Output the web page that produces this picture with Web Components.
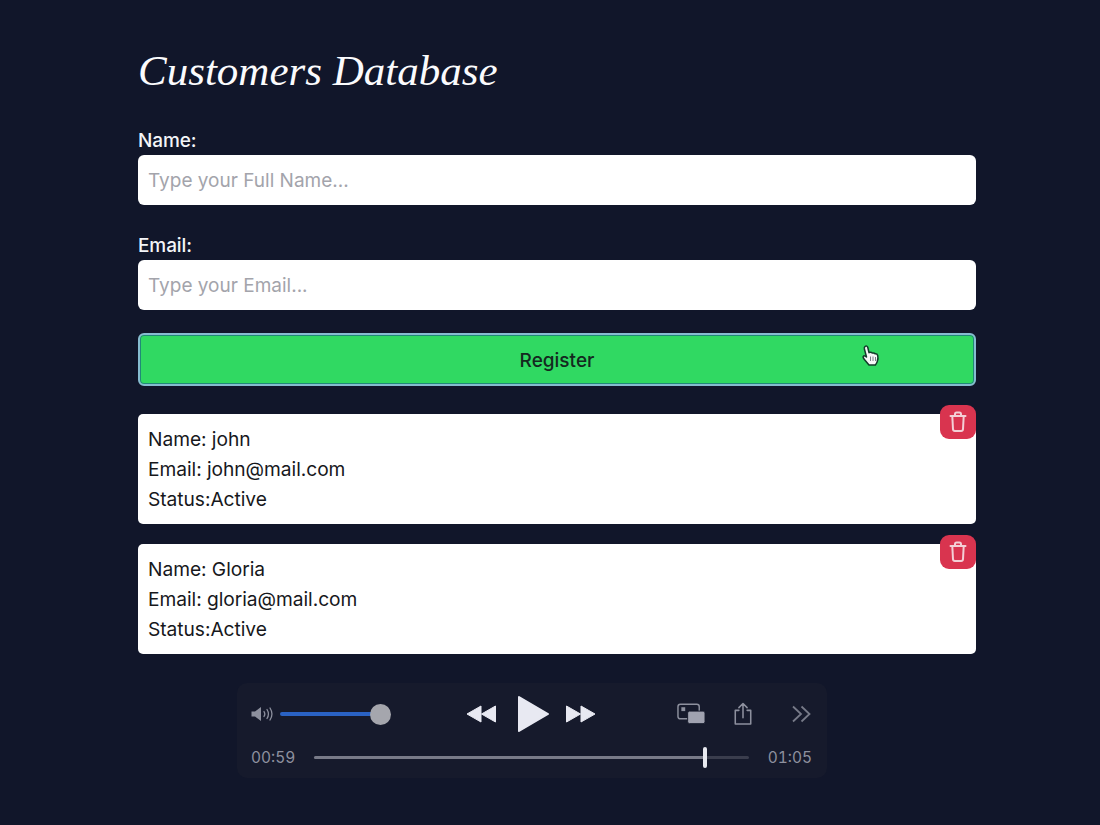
<!DOCTYPE html>
<html>
<head>
<meta charset="utf-8">
<title>Customers Database</title>
<style>
  html, body { margin: 0; padding: 0; }
  body {
    width: 1100px;
    height: 825px;
    overflow: hidden;
    background: #11162a;
    font-family: Inter, "Liberation Sans", sans-serif;
  }
</style>
</head>
<body>
<customers-app>
  <field-input label="Name:" placeholder="Type your Full Name..."></field-input>
  <field-input label="Email:" placeholder="Type your Email..."></field-input>
  <register-button>Register</register-button>
  <customer-card name="john" email="john@mail.com" status="Active"></customer-card>
  <customer-card name="Gloria" email="gloria@mail.com" status="Active"></customer-card>
</customers-app>
<video-controls></video-controls>

<script>
class CustomersApp extends HTMLElement {
  constructor() {
    super();
    this.attachShadow({ mode: 'open' });
    this.shadowRoot.innerHTML = `
      <style>
        :host {
          display: block;
          width: 838px;
          margin-left: 138px;
          padding-top: 44px;
        }
        h1 {
          margin: 0 0 25px;
          height: 54px;
          font: italic 400 43px/54px "Liberation Serif", serif;
          color: #fbfbfd;
          letter-spacing: 0;
        }
      </style>
      <h1>Customers Database</h1>
      <slot></slot>
    `;
  }
}

class FieldInput extends HTMLElement {
  constructor() {
    super();
    this.attachShadow({ mode: 'open' });
    this.shadowRoot.innerHTML = `
      <style>
        :host { display: block; padding-top: 7px; margin-bottom: 23px; }
        label {
          display: block;
          height: 22px;
          line-height: 22px;
          margin-bottom: 3px;
          font-size: 19px;
          font-weight: 500;
          color: #f4f5f8;
          letter-spacing: -0.1px;
        }
        input {
          display: block;
          box-sizing: border-box;
          width: 100%;
          height: 50px;
          padding: 0 10px;
          border: 0;
          border-radius: 6px;
          outline: none;
          background: #fff;
          font: 400 19px Inter, "Liberation Sans", sans-serif;
        }
        input::placeholder { color: #a3a4ab; opacity: 1; }
      </style>
      <label></label>
      <input type="text">
    `;
  }
  connectedCallback() {
    this.shadowRoot.querySelector('label').textContent = this.getAttribute('label');
    this.shadowRoot.querySelector('input').placeholder = this.getAttribute('placeholder');
  }
}

class RegisterButton extends HTMLElement {
  constructor() {
    super();
    this.attachShadow({ mode: 'open' });
    this.shadowRoot.innerHTML = `
      <style>
        :host { display: block; position: relative; margin: 0 0 28px; }
        button {
          display: block;
          box-sizing: border-box;
          width: 100%;
          height: 53px;
          padding: 1px 0 0;
          border: 2px solid #86bccf;
          border-radius: 6px;
          box-shadow: inset 0 0 0 1px #1f8a76;
          background: #30d962;
          color: #14291f;
          font: 500 19px Inter, "Liberation Sans", sans-serif;
        }
        svg { position: absolute; left: 722px; top: 11px; }
      </style>
      <button><slot></slot></button>
      <svg width="22" height="26" viewBox="0 0 22 26">
        <path d="M5 2.500c1.200-.9 2.500-.3 2.800 1l1.200 5.200c1.200-.6 2.600-.4 3.300.4 1.100-.4 2.200-.1 2.800.7 1.200-.2 2.200.4 2.600 1.600.5 2 .3 4.300-.5 6.300-.5 1.300-1.200 2.300-1.800 3.300H9c-1.500-1.800-3-3.600-4.400-5.300-.9-1-2-2.300-1.300-3.300.7-1 2-.5 3.200.6L4.400 5c-.2-1-.1-1.900.6-2.500z" fill="#f7f7f7" stroke="#123c2a" stroke-width="1.500" stroke-linejoin="round"/>
        <path d="M10.500 12.500v4.500M13 12.500v4.500M15.500 13v4" stroke="#7a7f88" stroke-width="1" fill="none"/>
      </svg>
    `;
  }
}

class CustomerCard extends HTMLElement {
  constructor() {
    super();
    this.attachShadow({ mode: 'open' });
    this.shadowRoot.innerHTML = `
      <style>
        :host { display: block; position: relative; margin-bottom: 20px; }
        .card {
          box-sizing: border-box;
          height: 110px;
          padding: 11px 10px;
          border-radius: 5px;
          background: #fff;
          color: #17181c;
          font-size: 19.200px;
          font-weight: 400;
          line-height: 29.800px;
          letter-spacing: -0.05px;
        }
        .delete {
          position: absolute;
          top: -9px;
          right: 0;
          width: 36px;
          height: 34px;
          display: flex;
          align-items: center;
          justify-content: center;
          border-radius: 9px;
          background: #d9344f;
        }
      </style>
      <div class="card">
        <div>Name: <span id="name"></span></div>
        <div>Email: <span id="email"></span></div>
        <div>Status:<span id="status"></span></div>
      </div>
      <div class="delete">
        <svg width="18" height="22" viewBox="0 0 18 22" fill="none" stroke="#f3cfd6" stroke-width="2" stroke-linecap="round" stroke-linejoin="round">
          <path d="M1.500 5h15M6 5V3.200C6 2.300 6.700 1.600 7.600 1.600h2.800c.9 0 1.600.7 1.600 1.600V5M3.300 5l.7 13.200c.1 1 .8 1.800 1.800 1.800h6.400c1 0 1.700-.8 1.800-1.800L14.700 5"/>
        </svg>
      </div>
    `;
  }
  connectedCallback() {
    ['name', 'email', 'status'].forEach(key => {
      this.shadowRoot.getElementById(key).textContent = this.getAttribute(key);
    });
  }
}

class VideoControls extends HTMLElement {
  constructor() {
    super();
    this.attachShadow({ mode: 'open' });
    this.shadowRoot.innerHTML = `
      <style>
        :host {
          display: block;
          box-sizing: border-box;
          width: 590px;
          height: 95px;
          margin: 29px 0 0 237px;
          padding: 11px 15px 0 14px;
          border-radius: 10px;
          background: #161a2c;
          color: #8d909e;
          font-size: 15.500px;
          font-variant-numeric: tabular-nums;
        }
        .top {
          display: grid;
          grid-template-columns: 143px 1fr 160px;
          align-items: center;
          height: 38px;
        }
        .volume { display: flex; align-items: center; gap: 5px; }
        .vol-track { position: relative; width: 100px; height: 4px; border-radius: 2px; background: #2a62c4; }
        .vol-thumb {
          position: absolute; right: -11px; top: -8.500px;
          width: 21px; height: 21px; border-radius: 50%;
          background: #a5a6ad;
        }
        .transport { display: flex; align-items: center; margin-left: 72px; }
        .play { margin: 0 16px 0 21px; }
        .extras { display: flex; align-items: center; justify-content: flex-end; }
        .share { margin: 0 38px 0 27px; }
        .bottom { display: flex; align-items: center; margin-top: 10px; height: 30px; }
        .time-track {
          position: relative; flex: 1; height: 3px; margin: 0 19px;
          border-radius: 2px; background: #3a3d4d;
        }
        .time-done { width: 391px; height: 100%; border-radius: 2px; background: #787a88; }
        .time-thumb {
          position: absolute; left: 389px; top: -9px;
          width: 4px; height: 21px; border-radius: 2px;
          background: #e8e9f0;
        }
      </style>
      <div class="top">
        <div class="volume">
          <svg width="24" height="18" viewBox="0 0 24 18" fill="none" stroke="#8d909e" stroke-width="1.300" stroke-linecap="round">
            <path d="M0.500 6.500h3.500L10 2v14l-6-4.500H0.500z" fill="#8d909e" stroke="none"/>
            <path d="M13 6.500c1 1.500 1 3.500 0 5M16 4.500c1.800 2.800 1.800 6.200 0 9M19 3c2.400 3.700 2.400 8.300 0 12"/>
          </svg>
          <div class="vol-track"><div class="vol-thumb"></div></div>
        </div>
        <div class="transport">
          <svg width="30" height="20" viewBox="0 0 30 20" fill="#e8e9f2">
            <path d="M1 10 15 2v16zM15.500 10 29.500 2v16z" stroke="#e8e9f2" stroke-linejoin="round"/>
          </svg>
          <svg class="play" width="33" height="40" viewBox="0 0 33 40" fill="#e8e9f2">
            <path d="M2 3 31 20 2 37z" stroke="#e8e9f2" stroke-width="2" stroke-linejoin="round"/>
          </svg>
          <svg width="30" height="20" viewBox="0 0 30 20" fill="#e8e9f2">
            <path d="M.5 2 14.500 10 .5 18zM15 2 29 10 15 18z" stroke="#e8e9f2" stroke-linejoin="round"/>
          </svg>
        </div>
        <div class="extras">
          <svg width="29" height="24" viewBox="0 0 30 24" fill="none">
            <rect x="1" y="2" width="22" height="15" rx="2.500" stroke="#8d909e" stroke-width="1.500"/>
            <rect x="4.500" y="5" width="4" height="4" fill="#8d909e"/>
            <rect x="11" y="9" width="18" height="13" rx="2" fill="#a0a2b0" stroke="#161a2c" stroke-width="1"/>
          </svg>
          <svg class="share" width="20" height="24" viewBox="0 0 22 26" fill="none" stroke="#8d909e" stroke-width="1.700" stroke-linecap="round" stroke-linejoin="round">
            <path d="M6.500 9H2.500v15h17V9h-4M11 17V2M6.500 6 11 1.500 15.500 6"/>
          </svg>
          <svg width="21" height="18" viewBox="0 0 21 18" fill="none" stroke="#777a88" stroke-width="1.800" stroke-linejoin="miter">
            <path d="M2 1.500 10 9l-8 7.500M10.500 1.500 18.500 9l-8 7.500"/>
          </svg>
        </div>
      </div>
      <div class="bottom">
        <span>00:59</span>
        <div class="time-track"><div class="time-done"></div><div class="time-thumb"></div></div>
        <span>01:05</span>
      </div>
    `;
  }
}

customElements.define('customers-app', CustomersApp);
customElements.define('field-input', FieldInput);
customElements.define('register-button', RegisterButton);
customElements.define('customer-card', CustomerCard);
customElements.define('video-controls', VideoControls);
</script>
</body>
</html>
